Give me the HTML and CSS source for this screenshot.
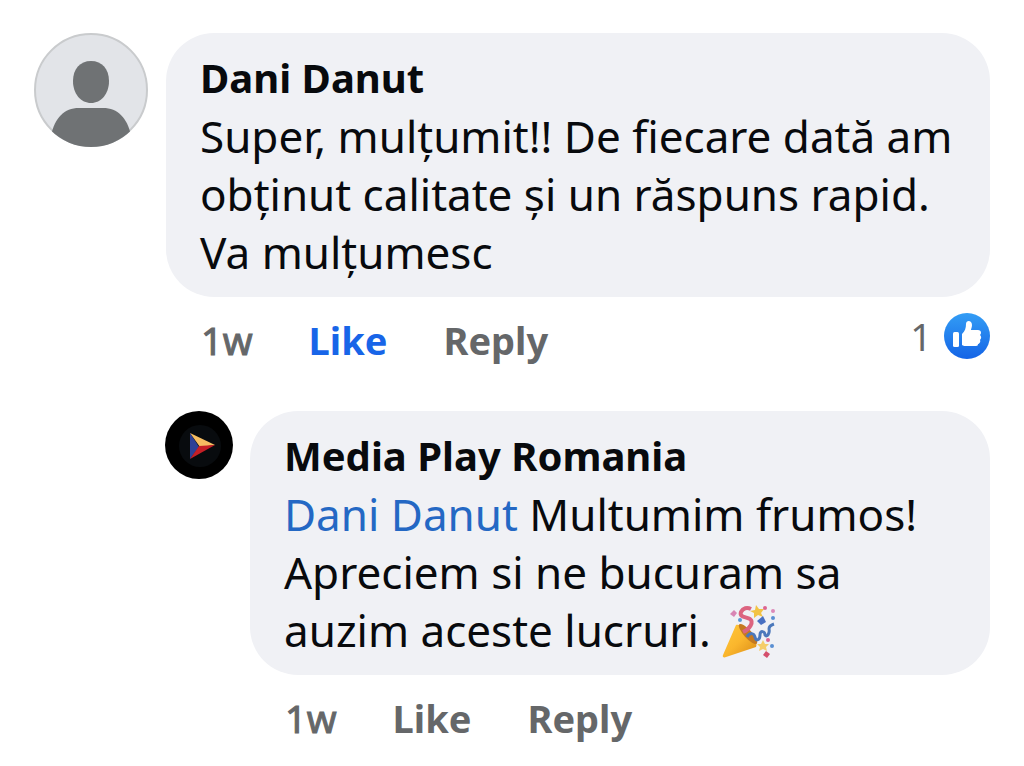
FILE: index.html
```html
<!DOCTYPE html>
<html lang="ro">
<head>
<meta charset="utf-8">
<meta name="viewport" content="width=device-width, initial-scale=1">
<title>Comments</title>
<link rel="stylesheet" href="styles.css">
</head>
<body>
<main class="thread">
  <article class="comment">
    <svg class="avatar" viewBox="0 0 114 114" role="img" aria-label="Dani Danut">
      <defs><clipPath id="face"><circle cx="57" cy="57" r="57"/></clipPath></defs>
      <circle cx="57" cy="57" r="56" fill="#e2e4e8" stroke="#c9cbcd" stroke-width="2"/>
      <g clip-path="url(#face)" fill="#6f7274">
        <path d="M57 28C68 28 75 36 75 48C75 61 67 70 57 70C47 70 39 61 39 48C39 36 46 28 57 28Z"/>
        <path d="M17 114V102C21 85 30 75 45 75H69C84 75 93 85 97 102V114Z"/>
      </g>
    </svg>
    <div class="body">
      <div class="bubble">
        <h2 class="name">Dani Danut</h2>
        <p class="text">Super, mulțumit!! De fiecare dată am obținut calitate și un răspuns rapid. Va mulțumesc</p>
      </div>
      <div class="actions">
        <time class="age">1w</time>
        <button class="action liked" type="button">Like</button>
        <button class="action" type="button">Reply</button>
        <span class="reactions">1
          <svg class="thumb" viewBox="0 0 46 46" role="img" aria-label="Like">
            <defs><linearGradient id="blue" x1="0" y1="0" x2="0" y2="1"><stop offset="0" stop-color="#339df5"/><stop offset="1" stop-color="#1464e6"/></linearGradient></defs>
            <circle cx="23" cy="23" r="23" fill="url(#blue)"/>
            <rect x="9" y="19" width="6" height="15" rx="1.5" fill="#fff"/>
            <path d="M18 21C21 18 22 15 22 11C22 7 28 7 28 12C28 14 27 16 27 17H34C37 17 38 20 36 22C38 24 37 26 36 27C37 29 35 31 34 31C34 33 33 33 30 33H24C21 33 19 33 18 32Z" fill="#fff"/>
          </svg>
        </span>
      </div>
    </div>
  </article>
  <article class="comment reply">
    <svg class="avatar small" viewBox="0 0 68 68" role="img" aria-label="Media Play Romania">
      <circle cx="34" cy="34" r="34" fill="#000"/>
      <circle cx="35" cy="35" r="21" fill="#080b0e"/>
      <path d="M25 22V48L34 36Z" fill="#2d4096"/>
      <path d="M25 22L50 34L35 36Z" fill="#f6bd62"/>
      <path d="M25 48L34 35L50 34Z" fill="#c51f26"/>
    </svg>
    <div class="body">
      <div class="bubble">
        <h2 class="name">Media Play Romania</h2>
        <p class="text"><a class="mention" href="#">Dani Danut</a> Multumim frumos! Apreciem si ne bucuram sa auzim aceste lucruri. <svg class="party" viewBox="0 0 54 54" role="img" aria-label="Party popper">
          <defs><linearGradient id="gold" x1="0" y1="0" x2="1" y2="1"><stop offset="0" stop-color="#ffc83a"/><stop offset=".5" stop-color="#fab62d"/><stop offset="1" stop-color="#d98a16"/></linearGradient></defs>
          <path d="M14 21L1 51C0 53 2 54 4 53L34 43C38 38 20 18 14 21Z" fill="url(#gold)"/>
          <ellipse cx="26" cy="30" rx="4" ry="13" transform="rotate(-42 26 30)" fill="#c47a22"/>
          <path d="M21 28C28 25 32 18 28 15C24 13 17 13 19 8C21 4 25 3 29 5" fill="none" stroke="#dc6480" stroke-width="4"/>
          <path d="M25 33C28 28 32 29 33 33C34 38 38 36 38 31C38 26 43 27 43 31C45 34 48 29 47 25C47 22 49 21 52 20" fill="none" stroke="#4b78bb" stroke-width="3"/>
          <path d="M34 1L37 5L42 5L39 9L41 13L36 11L32 14L32 9L28 7L33 6Z" fill="#f2c344"/>
          <path d="M41 36L43 40L47 40L44 43L45 47L41 45L37 47L38 43L35 40L39 40Z" fill="#f5cd69"/>
          <path d="M41 12L44 18L39 21L35 17Z" fill="#4870c2"/>
          <path d="M12 6L15 9L12 13L8 10Z" fill="#d886b4"/>
          <path d="M44 47L48 50L45 54L41 51Z" fill="#d44f6c"/>
          <circle cx="18" cy="16" r="2" fill="#5a9ad6"/><circle cx="43" cy="4" r="2" fill="#dc6690"/><circle cx="51" cy="7" r="2" fill="#dc8ab9"/><circle cx="51" cy="14" r="2" fill="#5a8fd2"/><circle cx="46" cy="36" r="2" fill="#dc6690"/><circle cx="50" cy="42" r="2" fill="#5a8fd2"/>
        </svg></p>
      </div>
      <div class="actions">
        <time class="age">1w</time>
        <button class="action" type="button">Like</button>
        <button class="action" type="button">Reply</button>
      </div>
    </div>
  </article>
</main>
</body>
</html>
```
FILE: styles.css
```css
* { box-sizing: border-box; }
body {
  margin: 0;
  background: #fff;
  color: #080a0d;
  font-family: "Noto Sans", sans-serif;
  font-size: 44px;
  line-height: 58px;
}
.thread {
  display: flex;
  flex-direction: column;
  gap: 42px;
  padding: 33px 34px 16px;
}
.comment { display: flex; align-items: flex-start; gap: 18px; }
.reply { margin-left: 131px; gap: 17px; }
.avatar { flex: none; width: 114px; height: 114px; }
.small { width: 68px; height: 68px; }
.body { flex: 1; min-width: 0; }
.bubble {
  padding: 16px 34px;
  border-radius: 48px;
  background: #f0f1f5;
}
.name { margin: 0; font-size: 40px; font-weight: 700; line-height: 58px; }
.text { margin: 0; }
.mention { color: #2468c4; text-decoration: none; }
.party { width: 54px; height: 54px; vertical-align: -11px; }
.actions {
  display: flex;
  align-items: center;
  gap: 56px;
  height: 58px;
  margin-top: 14px;
  padding-left: 35px;
  color: #656769;
  font-size: 38px;
}
.age { -webkit-text-stroke: 1px currentColor; }
.action {
  padding: 0;
  border: 0;
  background: none;
  color: inherit;
  font: inherit;
  font-weight: 700;
  cursor: pointer;
}
.liked { color: #1865e8; }
.reactions {
  display: flex;
  align-self: flex-start;
  align-items: center;
  gap: 12px;
  margin-left: auto;
  line-height: 50px;
}
.thumb { width: 46px; height: 46px; }
```
